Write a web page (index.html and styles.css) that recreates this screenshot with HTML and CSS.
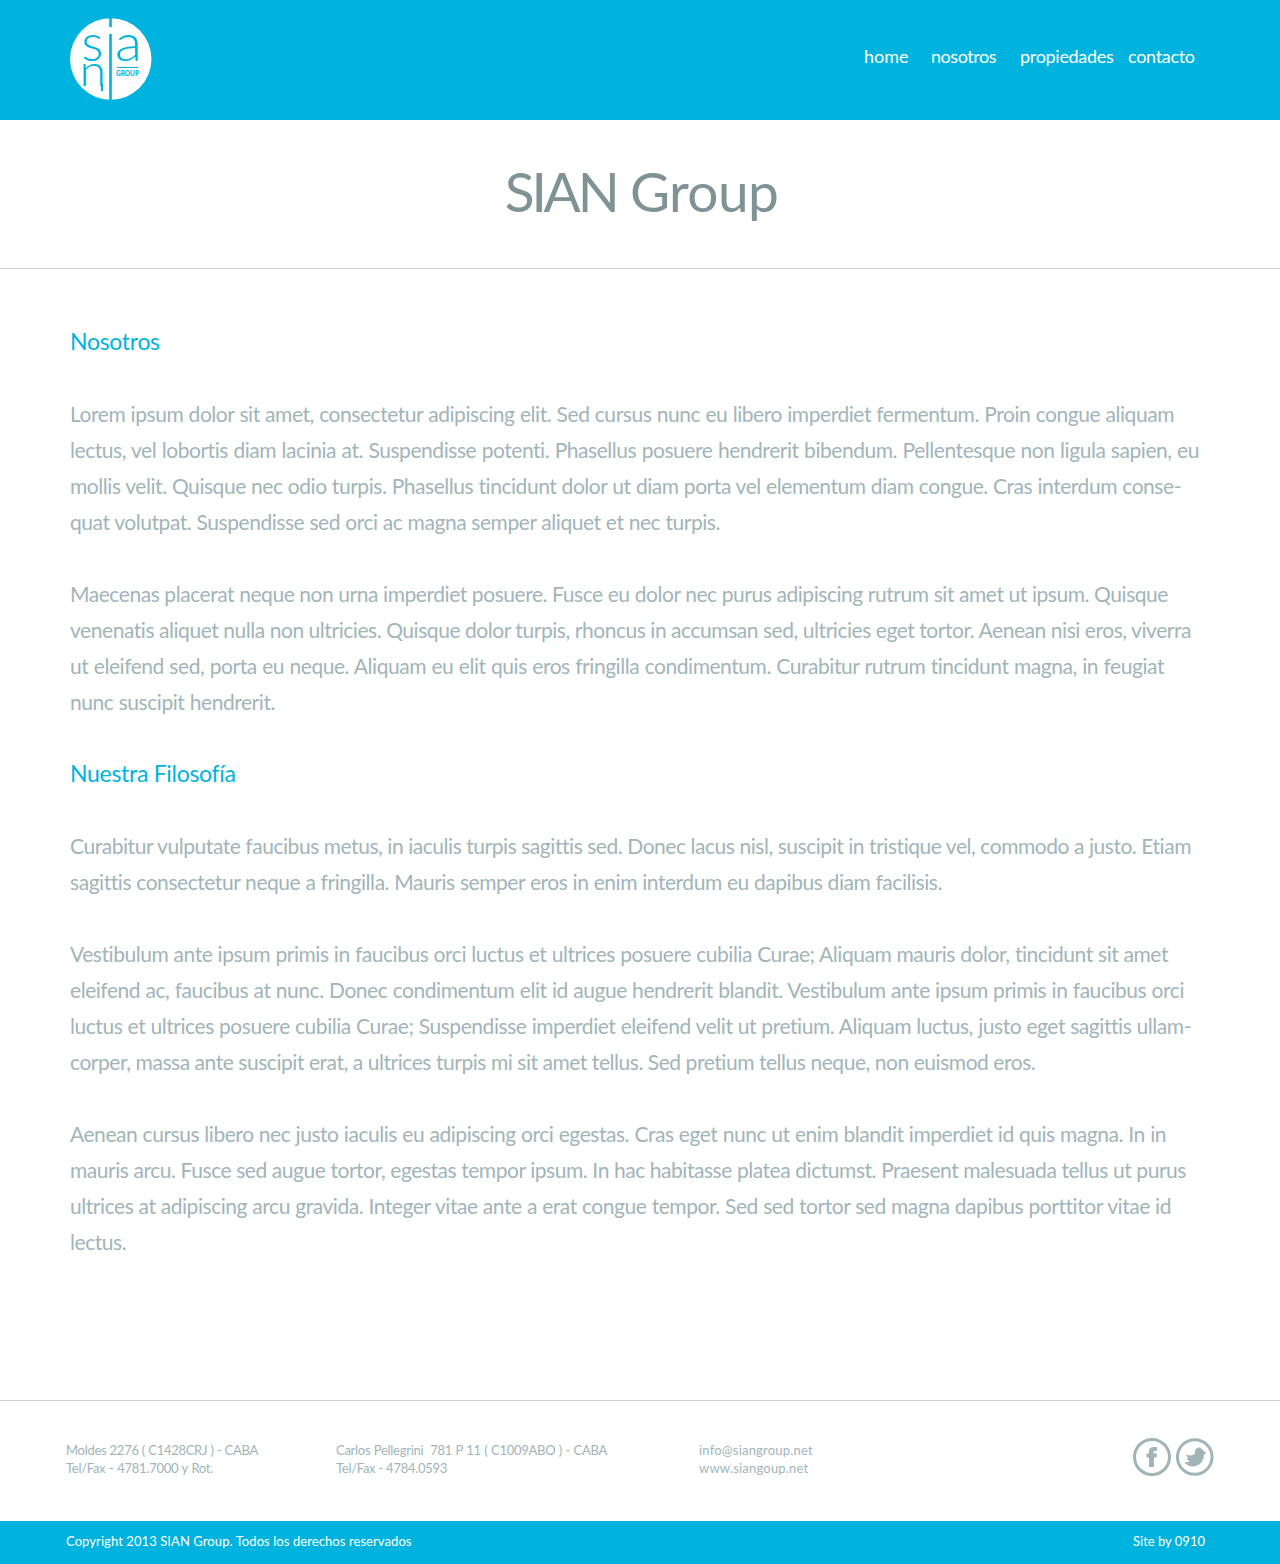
FILE: index.html
```html
<!DOCTYPE html>
<html lang="es">
<head>
<meta charset="utf-8">
<title>SIAN Group</title>
<link rel="stylesheet" href="styles.css">
</head>
<body>
<header class="header">
  <a class="logo" aria-label="SIAN Group">
    <svg width="82" height="82" viewBox="0 0 82 82">
      <circle cx="40.750" cy="41" r="40.750" fill="#fff"/>
      <path d="M40.500 0V9M40.500 16V82" stroke="#00b3de" stroke-width="2.600"/>
      <path d="M47 49.500H68" stroke="#00b3de" stroke-width="1"/>
      <g class="logo-letters">
        <text x="11.500" y="43" font-size="52" textLength="22" lengthAdjust="spacingAndGlyphs">s</text>
        <text x="45" y="43" font-size="52" textLength="27" lengthAdjust="spacingAndGlyphs">a</text>
        <text x="9.500" y="68" font-size="43" textLength="26.500" lengthAdjust="spacingAndGlyphs">n</text>
      </g>
      <path d="M32 66V73" stroke="#00b3de" stroke-width="2"/>
      <text class="logo-group" x="46" y="58" textLength="23" lengthAdjust="spacingAndGlyphs">GROUP</text>
    </svg>
  </a>
  <nav class="nav">
    <a class="nav-home">home</a>
    <a class="nav-about">nosotros</a>
    <a class="nav-list">propiedades</a>
    <a class="nav-contact">contacto</a>
  </nav>
</header>
<div class="title"><h1><span class="caps">SIAN</span> Group</h1></div>
<main class="content">
  <h2>Nosotros</h2>
  <p>
    <span style="width:1104px">Lorem ipsum dolor sit amet, consectetur adipiscing elit. Sed cursus nunc eu libero imperdiet fermentum. Proin congue aliquam</span>
    <span style="width:1129px">lectus, vel lobortis diam lacinia at. Suspendisse potenti. Phasellus posuere hendrerit bibendum. Pellentesque non ligula sapien, eu</span>
    <span style="width:1111px">mollis velit. Quisque nec odio turpis. Phasellus tincidunt dolor ut diam porta vel elementum diam congue. Cras interdum conse-</span>
    <span style="width:650px">quat volutpat. Suspendisse sed orci ac magna semper aliquet et nec turpis.</span>
  </p>
  <p>
    <span style="width:1098px">Maecenas placerat neque non urna imperdiet posuere. Fusce eu dolor nec purus adipiscing rutrum sit amet ut ipsum. Quisque</span>
    <span style="width:1121px">venenatis aliquet nulla non ultricies. Quisque dolor turpis, rhoncus in accumsan sed, ultricies eget tortor. Aenean nisi eros, viverra</span>
    <span style="width:1094px">ut eleifend sed, porta eu neque. Aliquam eu elit quis eros fringilla condimentum. Curabitur rutrum tincidunt magna, in feugiat</span>
    <span style="width:205px">nunc suscipit hendrerit.</span>
  </p>
  <h2>Nuestra Filosofía</h2>
  <p>
    <span style="width:1121px">Curabitur vulputate faucibus metus, in iaculis turpis sagittis sed. Donec lacus nisl, suscipit in tristique vel, commodo a justo. Etiam</span>
    <span style="width:872px">sagittis consectetur neque a fringilla. Mauris semper eros in enim interdum eu dapibus diam facilisis.</span>
  </p>
  <p>
    <span style="width:1098px">Vestibulum ante ipsum primis in faucibus orci luctus et ultrices posuere cubilia Curae; Aliquam mauris dolor, tincidunt sit amet</span>
    <span style="width:1114px">eleifend ac, faucibus at nunc. Donec condimentum elit id augue hendrerit blandit. Vestibulum ante ipsum primis in faucibus orci</span>
    <span style="width:1121px">luctus et ultrices posuere cubilia Curae; Suspendisse imperdiet eleifend velit ut pretium. Aliquam luctus, justo eget sagittis ullam-</span>
    <span style="width:964px">corper, massa ante suscipit erat, a ultrices turpis mi sit amet tellus. Sed pretium tellus neque, non euismod eros.</span>
  </p>
  <p>
    <span style="width:1096px">Aenean cursus libero nec justo iaculis eu adipiscing orci egestas. Cras eget nunc ut enim blandit imperdiet id quis magna. In in</span>
    <span style="width:1116px">mauris arcu. Fusce sed augue tortor, egestas tempor ipsum. In hac habitasse platea dictumst. Praesent malesuada tellus ut purus</span>
    <span style="width:1101px">ultrices at adipiscing arcu gravida. Integer vitae ante a erat congue tempor. Sed sed tortor sed magna dapibus porttitor vitae id</span>
    <span style="width:57px">lectus.</span>
  </p>
</main>
<footer>
  <div class="contact">
    <address class="office-a"><span style="width:192px">Moldes 2276 ( C1428CRJ ) - CABA</span><span style="width:147px">Tel/Fax - 4781.7000 y Rot.</span></address>
    <address class="office-b"><span style="width:271px">Carlos Pellegrini&nbsp; 781 P 11 ( C1009ABO ) - CABA</span><span style="width:111px">Tel/Fax - 4784.0593</span></address>
    <address class="online"><span>info@siangroup.net</span><span>www.siangoup.net</span></address>
    <div class="social">
      <svg width="38" height="38" viewBox="0 0 38 38" aria-label="Facebook">
        <circle cx="19" cy="19" r="17.500" fill="none" stroke="#a1b5b9" stroke-width="3"/>
        <path d="M16 29V19.500H13.500V15.500H16V13C16 10.300 17.800 9 20.500 9H24V13H22C21 13 20.500 13.400 20.500 14.300V15.500H24L23.500 19.500H21V29Z" fill="#a1b5b9"/>
      </svg>
      <svg width="38" height="38" viewBox="0 0 38 38" aria-label="Twitter">
        <circle cx="18.750" cy="19" r="17.300" fill="none" stroke="#a1b5b9" stroke-width="3"/>
        <path d="M8 24C10.500 24.500 12.500 24.200 14 23.200C12 22.600 11 21.500 11 20L12.500 19.800C10.800 18.800 10 17.500 10.300 16.300C13 18 16 18 19 15.500C18.500 12 20 10.500 21.500 9.800L23.500 9.500C25 9.700 26 11 26.500 12L29 13L27.800 14L30.500 14.500L28 17C28 23 23.500 28.500 16.500 28.500C13 28.500 10 26.500 8 24Z" fill="#a1b5b9"/>
      </svg>
    </div>
  </div>
  <div class="bottom">
    <span class="copy">Copyright 2013 SIAN Group. Todos los derechos reservados</span>
    <span class="credit">Site by 0910</span>
  </div>
</footer>
</body>
</html>
```
FILE: styles.css
```css
* { box-sizing: border-box; }
body {
  margin: 0;
  background: #fff;
  color: #a1b5b9;
  font-family: Lato, "Open Sans", sans-serif;
  font-variant-ligatures: none;
}
h1, h2, p { margin: 0; font-weight: 400; }
.header {
  height: 120px;
  padding: 18px 70px 0;
  display: flex;
  justify-content: space-between;
  background: #00b3de;
}
.logo svg { display: block; overflow: visible; }
.logo-letters { fill: #00b3de; font-weight: 300; }
.logo-group { fill: #00b3de; font-size: 6.5px; font-weight: 900; }
.nav {
  width: 346px;
  padding-top: 26px;
  display: flex;
  color: #fff;
  font-size: 18px;
  line-height: 24px;
  letter-spacing: -0.3px;
}
.nav-home { width: 67px; letter-spacing: 0; }
.nav-about { width: 89px; letter-spacing: -0.45px; }
.nav-list { width: 108px; }
.title {
  height: 149px;
  padding: 35px 0 0 3px;
  border-bottom: 1px solid #cdcfcf;
  text-align: center;
}
h1 {
  color: #7f9396;
  font-size: 55px;
  line-height: 72px;
  letter-spacing: -0.6px;
}
.caps { letter-spacing: -3.2px; }
.content {
  height: 1131px;
  padding: 54px 70px 0;
  font-size: 21px;
  line-height: 36px;
  letter-spacing: -0.45px;
}
h2 {
  margin-bottom: 37px;
  color: #00b3de;
  font-size: 23px;
  line-height: 36px;
  letter-spacing: -0.3px;
}
.content p { margin-bottom: 36px; }
.content p + h2 { margin-top: -1px; }
.content p span, address span {
  display: block;
  white-space: nowrap;
  text-align-last: justify;
}
.contact {
  height: 121px;
  padding: 37px 66px 0;
  display: flex;
  border-top: 1px solid #cdcfcf;
}
address {
  padding-top: 3px;
  font-size: 13px;
  font-style: normal;
  line-height: 18px;
  letter-spacing: -0.28px;
}
.office-a { width: 270px; }
.office-b { width: 363px; }
.online { letter-spacing: 0.2px; }
.social { margin-left: auto; display: flex; gap: 5px; }
.bottom {
  height: 43px;
  padding: 0 75px 0 66px;
  display: flex;
  justify-content: space-between;
  background: #00b3de;
  color: #fff;
  font-size: 13px;
  line-height: 41px;
}
.copy { letter-spacing: 0.08px; }
```
